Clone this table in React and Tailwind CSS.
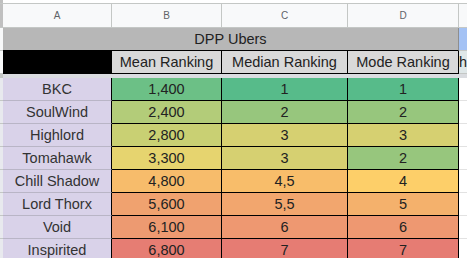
import React from 'react';

const rows = [
    { name: 'BKC', mean: '1,400', median: '1', mode: '1', b: 'bg-[#6cc086]', c: 'bg-[#57bb8a]', d: 'bg-[#57bb8a]' },
    { name: 'SoulWind', mean: '2,400', median: '2', mode: '2', b: 'bg-[#b3cc79]', c: 'bg-[#97c67d]', d: 'bg-[#97c67d]' },
    { name: 'Highlord', mean: '2,800', median: '3', mode: '3', b: 'bg-[#c9d073]', c: 'bg-[#d6d071]', d: 'bg-[#d6d071]' },
    { name: 'Tomahawk', mean: '3,300', median: '3', mode: '2', b: 'bg-[#e6d46f]', c: 'bg-[#d6d071]', d: 'bg-[#97c67d]' },
    { name: 'Chill Shadow', mean: '4,800', median: '4,5', mode: '4', b: 'bg-[#f7bc6b]', c: 'bg-[#f8bd6a]', d: 'bg-[#fdcf69]' },
    { name: 'Lord Thorx', mean: '5,600', median: '5,5', mode: '5', b: 'bg-[#f0a26f]', c: 'bg-[#f2a66e]', d: 'bg-[#f4b16c]' },
    { name: 'Void', mean: '6,100', median: '6', mode: '6', b: 'bg-[#ed9a71]', c: 'bg-[#ee9871]', d: 'bg-[#ee9871]' },
    { name: 'Inspirited', mean: '6,800', median: '7', mode: '7', b: 'bg-[#e67d73]', c: 'bg-[#e67c73]', d: 'bg-[#e67c73]' },
];

const cell = "flex items-center justify-center shrink-0 box-border";

const App = () => {
    return (
        <div className="w-[467px] h-[258px] overflow-hidden bg-white font-['Liberation_Sans',Arial,sans-serif] text-[#222] leading-none">
            {/* top strip */}
            <div className="flex h-[4px] border-b border-[#c4c7c5]">
                <div className="w-[3px] bg-[#c0c0c0]" />
                <div className="flex-1 bg-white" />
            </div>

            {/* column letters */}
            <div className="flex h-[24px] bg-[#f8f9fa] border-b border-[#c4c7c5] text-[10px] text-[#5f6368]">
                <div className="w-[3px] bg-[#c0c0c0]" />
                <div className={`${cell} w-[109px] border-r border-[#c4c7c5]`}>A</div>
                <div className={`${cell} w-[110px] border-r border-[#c4c7c5]`}>B</div>
                <div className={`${cell} w-[126px] border-r border-[#c4c7c5]`}>C</div>
                <div className={`${cell} w-[111px] border-r border-[#c4c7c5]`}>D</div>
                <div className="flex-1" />
            </div>

            {/* title row */}
            <div className="flex h-[23px] text-[14.5px]">
                <div className="w-[3px] bg-[#f8f9fa] border-b border-[#c4c7c5]" />
                <div className={`${cell} w-[456px] bg-[#b7b7b7] border-r border-[#8e8e8e] border-b border-b-black`}>
                    DPP Ubers
                </div>
                <div className="flex-1 bg-[#a4c2f4] border-b border-[#c4c7c5]" />
            </div>

            {/* header row */}
            <div className="flex h-[23px] text-[14.5px]">
                <div className="w-[3px] bg-[#f8f9fa] border-b border-[#c4c7c5]" />
                <div className="w-[109px] shrink-0 bg-black" />
                <div className={`${cell} w-[110px] bg-[#d9d9d9] border-r border-b border-black`}>Mean Ranking</div>
                <div className={`${cell} w-[126px] bg-[#d9d9d9] border-r border-b border-black`}>Median Ranking</div>
                <div className={`${cell} w-[111px] bg-[#d9d9d9] border-r border-b border-black`}>Mode Ranking</div>
                <div className="flex-1 overflow-hidden whitespace-nowrap bg-[#dfe7e8] border-b border-[#c4c7c5] flex items-center">h</div>
            </div>

            {/* frozen divider */}
            <div className="flex h-[4px]">
                <div className="w-[3px] bg-[#c4c7c5]" />
                <div className="flex-1 bg-[#dadce0]" />
            </div>

            {/* data rows */}
            {rows.map((r) => (
                <div key={r.name} className="flex h-[23px] text-[14.5px]">
                    <div className="w-[3px] bg-[#e8e9ee] border-b border-[#c4c7c5]" />
                    <div className={`${cell} w-[109px] bg-[#d9d2e9] text-[#333] border-b border-r border-[#b9b5c6] border-r-black`}>{r.name}</div>
                    <div className={`${cell} w-[110px] ${r.b} border-r border-b border-black`}>{r.mean}</div>
                    <div className={`${cell} w-[126px] ${r.c} border-r border-b border-black`}>{r.median}</div>
                    <div className={`${cell} w-[111px] ${r.d} border-r border-b border-black`}>{r.mode}</div>
                    <div className="flex-1 bg-white border-b border-[#e2e2e2]" />
                </div>
            ))}
        </div>
    );
};

export default App;
